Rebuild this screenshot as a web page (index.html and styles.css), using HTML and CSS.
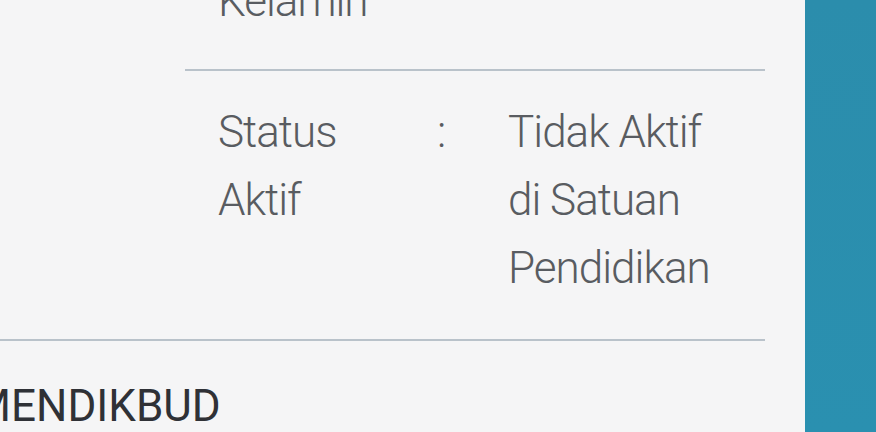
FILE: index.html
```html
<!DOCTYPE html>
<html lang="id">
<head>
<meta charset="utf-8">
<title>Data Siswa</title>
<link rel="stylesheet" href="styles.css">
</head>
<body>
<div class="page">
  <main class="main">
    <div class="details">
      <div class="row first">
        <div class="label">Jenis<br>Kelamin</div>
        <div class="colon">:</div>
        <div class="value">Laki-laki</div>
      </div>
      <div class="row last">
        <div class="label">Status<br>Aktif</div>
        <div class="colon">:</div>
        <div class="value">Tidak Aktif<br>di Satuan<br>Pendidikan</div>
      </div>
    </div>
    <footer class="footer">
      <div class="brand">KEMENDIKBUD</div>
    </footer>
  </main>
  <aside class="side"></aside>
</div>
</body>
</html>
```
FILE: styles.css
```css
html, body {
  margin: 0;
  padding: 0;
}
body {
  width: 876px;
  height: 432px;
  overflow: hidden;
  background: #f5f5f6;
  font-family: Roboto, "Open Sans", sans-serif;
  font-variant-ligatures: none;
}
.page {
  display: flex;
  height: 432px;
  overflow: hidden;
}
.main {
  width: 805px;
  flex: none;
  margin-top: -128px;
}
.side {
  flex: 1;
  background: linear-gradient(180deg, #2b8dac 0%, #2a90b0 100%);
}
.details {
  margin-left: 185px;
  width: 580px;
}
.row {
  display: grid;
  grid-template-columns: 219px 71px 1fr;
  padding: 27px 0 37px 33px;
  border-bottom: 2px solid #b9c2ca;
  font-size: 44px;
  font-weight: 300;
  letter-spacing: -1px;
  line-height: 68px;
  color: #595c61;
}
.row.first {
  padding-bottom: 34px;
}
.row.last {
  border-bottom: none;
}
.footer {
  width: 765px;
  border-top: 2px solid #b9c2ca;
  padding-top: 37px;
  overflow: hidden;
}
.brand {
  font-size: 44px;
  font-weight: 400;
  color: #2f3136;
  line-height: 56px;
  white-space: nowrap;
  text-indent: -80px;
}
```
